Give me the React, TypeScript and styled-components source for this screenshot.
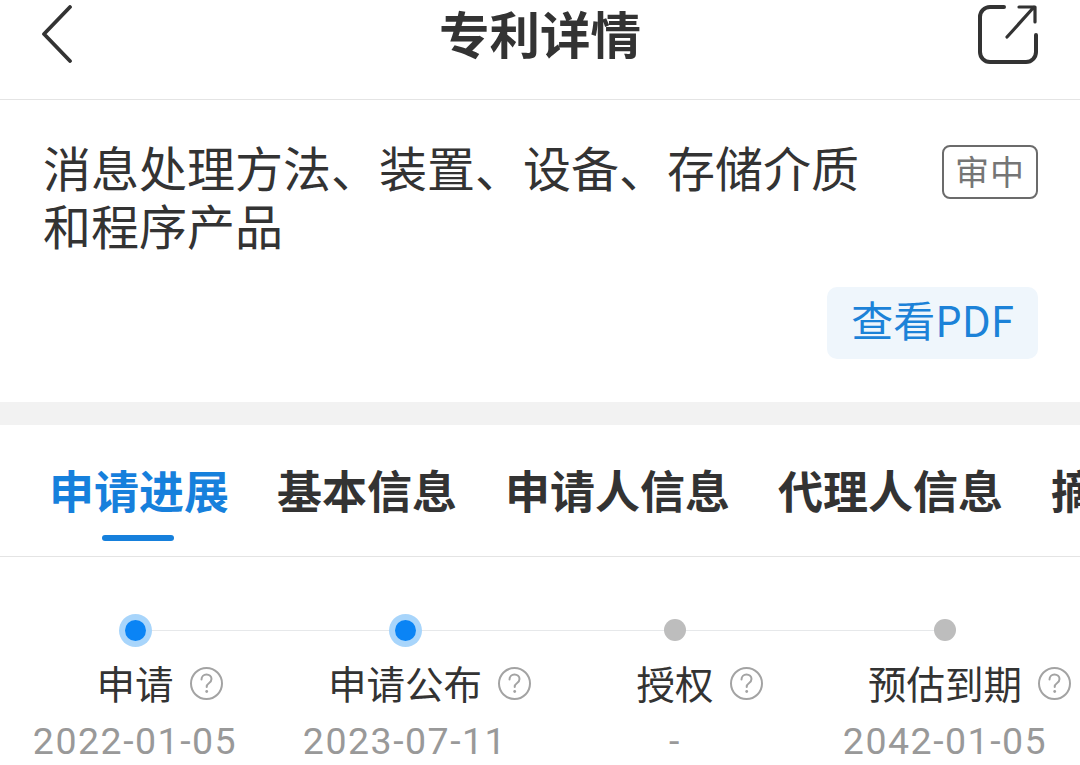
import React from "react";
import styled, { createGlobalStyle } from "styled-components";

const Global = createGlobalStyle`
  html, body { margin: 0; padding: 0; background: #fff; overflow: hidden; }
  #root { width: 1080px; height: 765px; overflow: hidden; }
  * { box-sizing: border-box; }
`;

const CJK = `"Noto Sans CJK SC", "Noto Sans", sans-serif`;

const Page = styled.div`
  width: 1080px;
  height: 765px;
  overflow: hidden;
  background: #fff;
  font-family: ${CJK};
  color: #333;
`;

const Header = styled.header`
  height: 100px;
  border-bottom: 1px solid #e4e4e4;
  display: flex;
  align-items: flex-start;
  justify-content: space-between;
  padding: 0 42px 0 40px;
`;

const IconSlot = styled.div`
  width: 60px;
  height: 64px;
  margin-top: 2px;
  display: flex;
  align-items: center;
  justify-content: ${(p: { $end?: boolean }) => (p.$end ? "flex-end" : "flex-start")};
`;

const Title = styled.h1`
  margin: -5px 0 0;
  padding-left: 2px;
  font-size: 50.5px;
  line-height: 74px;
  font-weight: 700;
  color: #333;
`;

const Summary = styled.section`
  height: 302px;
  padding: 37px 42px 0 43px;
  display: flex;
  flex-direction: column;
`;

const SummaryTop = styled.div`
  display: flex;
  justify-content: space-between;
  align-items: flex-start;
`;

const PatentName = styled.div`
  width: 829px;
  font-size: 48px;
  line-height: 58px;
  color: #333;
`;

const Tag = styled.span`
  width: 96px;
  height: 54px;
  margin-top: 8px;
  padding-bottom: 4px;
  border: 2px solid #6b6b6b;
  border-radius: 8px;
  display: flex;
  align-items: center;
  justify-content: center;
  font-size: 34px;
  letter-spacing: 1px;
  color: #757575;
`;

const PdfButton = styled.button`
  align-self: flex-end;
  width: 211px;
  height: 72px;
  margin-top: 34px;
  border: 0;
  border-radius: 10px;
  background: #eff6fc;
  color: #1c82d8;
  font-family: ${CJK};
  font-size: 42px;
  line-height: 60px;
  padding: 0 0 8px;
`;

const Divider = styled.div`
  height: 23px;
  background: #f2f2f2;
`;

const Tabs = styled.nav`
  height: 132px;
  border-bottom: 1px solid #e4e4e4;
  display: flex;
  gap: 48px;
  padding: 33px 0 0 49px;
  white-space: nowrap;
  overflow: hidden;
`;

const Tab = styled.div<{ $active?: boolean }>`
  position: relative;
  height: 64px;
  font-size: 45px;
  line-height: 64px;
  font-weight: 700;
  color: ${(p) => (p.$active ? "#1680dc" : "#333")};
  flex: none;
  &::after {
    content: "";
    display: ${(p) => (p.$active ? "block" : "none")};
    position: absolute;
    left: 50%;
    bottom: -19px;
    width: 72px;
    height: 6px;
    margin-left: -37px;
    border-radius: 3px;
    background: #1680dc;
  }
`;

const Steps = styled.div`
  display: grid;
  grid-template-columns: repeat(4, 270px);
  padding: 56px 0 0;
`;

const Step = styled.div`
  position: relative;
  display: flex;
  flex-direction: column;
  align-items: center;
`;

const DotRow = styled.div`
  height: 34px;
  display: flex;
  align-items: center;
  justify-content: center;
`;

const Connector = styled.span`
  position: absolute;
  top: 17px;
  left: 135px;
  width: 270px;
  height: 1px;
  background: #e6e8ea;
`;

const Dot = styled.span<{ $done?: boolean }>`
  position: relative;
  z-index: 1;
  border-radius: 50%;
  width: ${(p) => (p.$done ? "21px" : "22px")};
  height: ${(p) => (p.$done ? "21px" : "22px")};
  background: ${(p) => (p.$done ? "#0a84f5" : "#bdbdbd")};
  box-shadow: ${(p) => (p.$done ? "0 0 0 6px #a8d5fb" : "none")};
`;

const Label = styled.div`
  position: relative;
  margin-top: 13px;
  font-size: 38.5px;
  line-height: 44px;
  color: #333;
  white-space: nowrap;
`;

const Help = styled.svg`
  position: absolute;
  left: calc(100% + 15px);
  top: 6px;
  width: 35px;
  height: 35px;
`;

const DateText = styled.div`
  margin-top: 15px;
  font-family: Roboto, "Noto Sans", sans-serif;
  font-size: 37.5px;
  line-height: 44px;
  letter-spacing: 1.5px;
  color: #999;
  white-space: nowrap;
`;

const HelpIcon = () => (
  <Help viewBox="0 0 35 35" fill="none">
    <circle cx="17.5" cy="17.5" r="15.5" stroke="#a3a3a3" strokeWidth="2" />
    <path d="M12.5 13.5c0-3 2.2-5 5-5s5 2 5 4.6c0 2-1 3.1-2.6 4.2-1.5 1-2.2 1.9-2.2 3.7" stroke="#a3a3a3" strokeWidth="2" strokeLinecap="round" />
    <circle cx="17.7" cy="25.5" r="1.4" fill="#a3a3a3" />
  </Help>
);

const steps = [
  { label: "申请", date: "2022-01-05", done: true },
  { label: "申请公布", date: "2023-07-11", done: true },
  { label: "授权", date: "-", done: false },
  { label: "预估到期", date: "2042-01-05", done: false },
];

const tabs = ["申请进展", "基本信息", "申请人信息", "代理人信息", "摘要"];

export default function App() {
  return (
    <Page>
      <Global />
      <Header>
        <IconSlot>
          <svg width="34" height="58" viewBox="0 0 34 58" fill="none">
            <path d="M30 2 L4 29 L30 56" stroke="#333" strokeWidth="3.8" strokeLinecap="round" strokeLinejoin="round" />
          </svg>
        </IconSlot>
        <Title>专利详情</Title>
        <IconSlot $end>
          <svg width="60" height="60" viewBox="0 0 60 60" fill="none">
            <path d="M26 3 H12 a10 10 0 0 0 -10 10 V48 a10 10 0 0 0 10 10 H48 a10 10 0 0 0 10 -10 V31" stroke="#333" strokeWidth="4" strokeLinecap="round" />
            <path d="M29 33 L56 3 M41 3 H57 V18" stroke="#333" strokeWidth="3.2" strokeLinecap="round" strokeLinejoin="round" />
          </svg>
        </IconSlot>
      </Header>
      <Summary>
        <SummaryTop>
          <PatentName>消息处理方法、装置、设备、存储介质和程序产品</PatentName>
          <Tag>审中</Tag>
        </SummaryTop>
        <PdfButton>查看PDF</PdfButton>
      </Summary>
      <Divider />
      <Tabs>
        {tabs.map((t, i) => (
          <Tab key={t} $active={i === 0}>{t}</Tab>
        ))}
      </Tabs>
      <Steps>
        {steps.map((s, i) => (
          <Step key={s.label}>
            {i < steps.length - 1 && <Connector />}
            <DotRow><Dot $done={s.done} /></DotRow>
            <Label>
              {s.label}
              <HelpIcon />
            </Label>
            <DateText>{s.date}</DateText>
          </Step>
        ))}
      </Steps>
    </Page>
  );
}
